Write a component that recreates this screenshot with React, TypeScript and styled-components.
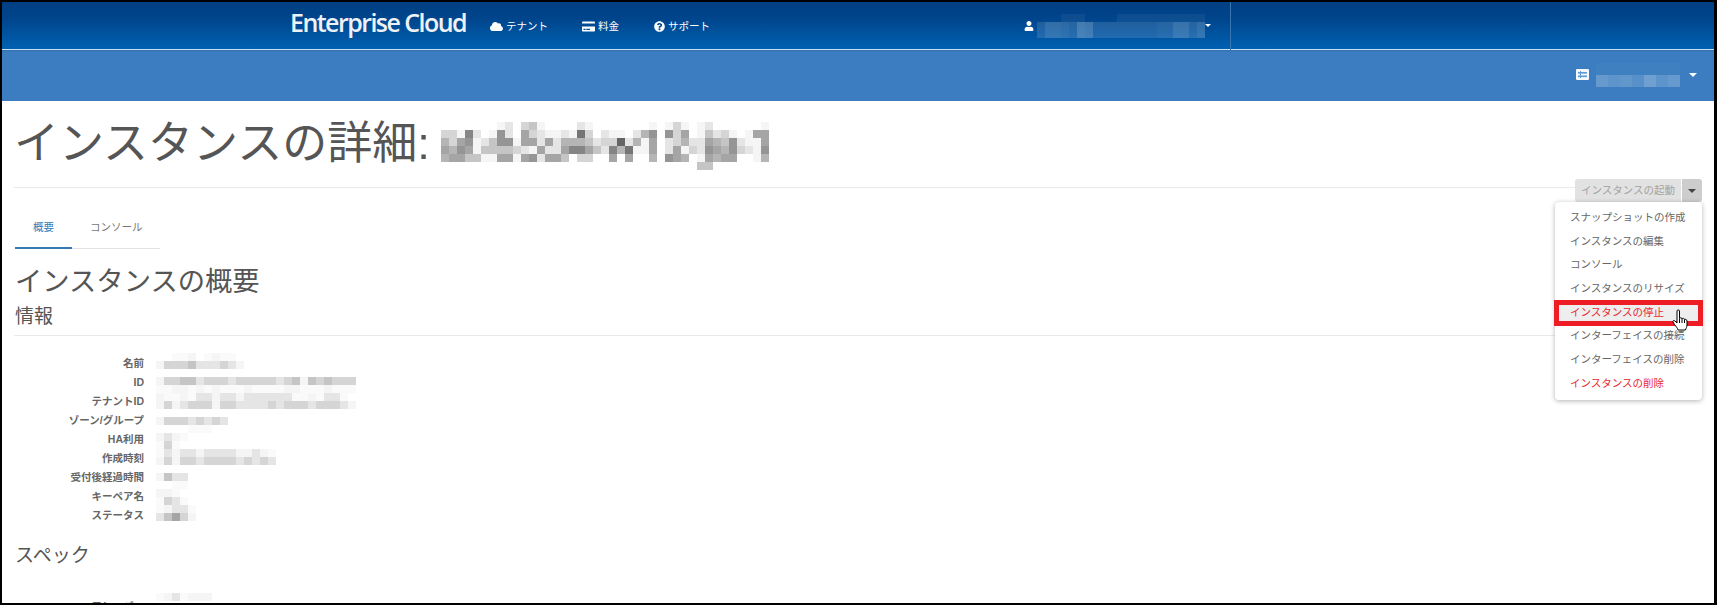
import styled, { createGlobalStyle } from 'styled-components';
import { FaCloud, FaCreditCard, FaQuestionCircle, FaUser } from 'react-icons/fa';

const GlobalStyle = createGlobalStyle`
  html, body {
    margin: 0;
    padding: 0;
    background: #fff;
    font-family: "Liberation Sans", "Noto Sans CJK JP", sans-serif;
    color: #555;
  }
`;

const Frame = styled.div`
  box-sizing: border-box;
  width: 1717px;
  height: 605px;
  overflow: hidden;
  border-style: solid;
  border-color: #000;
  border-width: 2px 3px 2px 2px;
  background: #fff;
`;

const TopBar = styled.header`
  display: flex;
  height: 47px;
  border-bottom: 1px solid #c9e0f4;
  background: linear-gradient(to bottom, #003f83 0%, #00458c 35%, #0061b2 100%);
  color: #fff;
`;

const TopBarInner = styled.div`
  box-sizing: border-box;
  display: flex;
  align-items: center;
  justify-content: space-between;
  width: 1229px;
  height: 48px;
  padding: 0 19px 0 288px;
  border-right: 1px solid #3a75b0;
`;

const Brand = styled.div`
  display: flex;
  align-items: center;
`;

const Logo = styled.div`
  width: 176px;
  margin-top: -9px;
  font-family: "Open Sans", sans-serif;
  font-size: 25px;
  font-weight: 600;
  line-height: 30px;
  letter-spacing: -1.55px;
  color: #eef2f6;
  white-space: nowrap;
`;

const NavItem = styled.div<{ $left: number }>`
  display: flex;
  align-items: center;
  gap: 3px;
  margin-left: ${(p) => p.$left}px;
  font-size: 10.5px;
  line-height: 14px;
  color: #fff;
`;

const UserBox = styled.div`
  display: flex;
  align-items: center;
  margin-top: -1px;

  svg {
    margin-right: 3px;
  }
`;

const Caret = styled.span<{ $size: number; $color: string; $left?: number }>`
  display: inline-block;
  width: 0;
  height: 0;
  margin-left: ${(p) => p.$left ?? 0}px;
  border-left: ${(p) => p.$size}px solid transparent;
  border-right: ${(p) => p.$size}px solid transparent;
  border-top: ${(p) => p.$size}px solid ${(p) => p.$color};
`;

const SubBar = styled.div`
  box-sizing: border-box;
  display: flex;
  align-items: center;
  justify-content: flex-end;
  height: 51px;
  padding: 0 17px 2px 0;
  background: linear-gradient(to bottom, #336fa9 0, #3b7dc0 2px, #3b7dc0 100%);

  svg {
    margin-right: 7px;
  }
`;

const Content = styled.main`
  padding: 0 12px;
`;

const PageHeader = styled.div`
  display: flex;
  align-items: flex-start;
  height: 86px;
  border-bottom: 1px solid #eaeaea;
`;

const PageTitle = styled.h1`
  margin: 18px 0 0 0;
  font-size: 45px;
  line-height: 50px;
  font-weight: 400;
  color: #555;
  white-space: nowrap;
`;

const TitleBlur = styled.div`
  margin: 21px 0 0 11px;
`;

const Toolbar = styled.div`
  display: flex;
  justify-content: flex-end;
  margin-top: -9px;
`;

const ButtonGroup = styled.div`
  position: relative;
  display: flex;
  height: 23px;
`;

const ActionButton = styled.div`
  width: 106px;
  border-radius: 3px 0 0 3px;
  background: #e2e2e2;
  color: #a3a3a3;
  font-size: 10.5px;
  line-height: 23px;
  text-align: center;
`;

const CaretButton = styled.div`
  display: flex;
  align-items: center;
  justify-content: center;
  width: 20px;
  margin-left: 1px;
  border-radius: 0 3px 3px 0;
  background: #cdcdcd;
`;

const Menu = styled.ul`
  box-sizing: border-box;
  position: absolute;
  top: 23px;
  right: 0;
  z-index: 5;
  width: 147px;
  height: 198px;
  margin: 0;
  padding: 4px 0;
  list-style: none;
  background: #fff;
  border-radius: 4px;
  box-shadow: 0 1px 5px rgba(0, 0, 0, 0.3);
`;

const MenuItem = styled.li<{ $danger?: boolean; $active?: boolean }>`
  position: relative;
  height: 23.7px;
  padding-left: 15px;
  font-size: 10.5px;
  line-height: 23.7px;
  white-space: nowrap;
  color: ${(p) => (p.$danger ? '#e8292f' : '#666')};
  background: ${(p) => (p.$active ? '#eeeeee' : 'transparent')};
`;

const Callout = styled.span`
  box-sizing: border-box;
  position: absolute;
  top: -1px;
  left: -1px;
  width: 149px;
  height: 26px;
  border: 5px solid #ee1c25;
`;

const HandCursor = styled.svg`
  position: absolute;
  top: 8px;
  left: 117px;
`;

const Tabs = styled.div`
  display: flex;
  width: 145px;
  height: 41px;
  margin: 5px 0 0 1px;
  border-bottom: 1px solid #e2e2e2;
`;

const Tab = styled.div<{ $active?: boolean }>`
  box-sizing: border-box;
  flex: none;
  height: 42px;
  padding: 0 18px;
  font-size: 10.5px;
  line-height: 40px;
  white-space: nowrap;
  color: ${(p) => (p.$active ? '#337ab7' : '#777')};
  border-bottom: 2px solid ${(p) => (p.$active ? '#337ab7' : 'transparent')};
`;

const SectionTitle = styled.h2`
  margin: 15px 0 0 1px;
  font-size: 27.3px;
  line-height: 36px;
  font-weight: 400;
  color: #555;
`;

const SubTitle = styled.h3<{ $top: number }>`
  margin: ${(p) => p.$top}px 0 0 1px;
  font-size: 19px;
  line-height: 26px;
  font-weight: 400;
  color: #555;
`;

const Rule = styled.div`
  height: 1px;
  margin-top: 5px;
  background: #eaeaea;
`;

const InfoBody = styled.div<{ $top: number }>`
  display: flex;
  align-items: flex-start;
  margin-top: ${(p) => p.$top}px;
`;

const Labels = styled.dl<{ $pad: number }>`
  flex: none;
  width: 130px;
  margin: 0 12px 0 0;
  padding-top: ${(p) => p.$pad}px;
`;

const Label = styled.dt`
  height: 19px;
  font-size: 10.5px;
  line-height: 19px;
  font-weight: 700;
  text-align: right;
  color: #666;
  white-space: nowrap;
`;

const MosaicRow = styled.div<{ $cell: number }>`
  display: flex;
  height: ${(p) => p.$cell}px;
`;

const MosaicCell = styled.span<{ $cell: number }>`
  flex: none;
  width: ${(p) => p.$cell}px;
  height: 100%;
`;

type Tone = 'gray' | 'tint';

// Each character of a row is one cell of the pixelated redaction.
function cellColor(ch: string, tone: Tone) {
  if (ch === '.') return 'transparent';
  const d = parseInt(ch, 17);
  if (tone === 'tint') return `rgba(255,255,255,${(d * 0.025).toFixed(3)})`;
  const v = Math.min(250, d * 16 + 5);
  return `rgb(${v},${v},${v})`;
}

function Mosaic({ rows, cell = 8, tone = 'gray' }: { rows: string[]; cell?: number; tone?: Tone }) {
  return (
    <div>
      {rows.map((row, i) => (
        <MosaicRow key={i} $cell={cell}>
          {row.split('').map((ch, j) => (
            <MosaicCell key={j} $cell={cell} style={{ background: cellColor(ch, tone) }} />
          ))}
        </MosaicRow>
      ))}
    </div>
  );
}

const titleRows = [
  '.......fe.dcf....ef.......f.fdf.fe......f',
  'ddf8e.f9e.adeffef7d.eff.eb9.9da.fcedf.faa',
  'bda9fec99faaeaebbbcedd6ebfa.edbeeabc9effa',
  'ab9afccccdefaeea88ace8b7ffa.eafde9ab9def9',
  'baaccffaafa9eaac.dd..a.a..b.9ab.fabaa..fb',
  '................................cc.......',
];

const valueRows = [
  '..ggf.gfgg',
  'fdddceeedef',
  '',
  'fddccedddedddddedcfcdcddd',
  'ggffgfgfgggfggggffgggfggg',
  'fggfgeefeefeeeeeeggfgeeg',
  'fdfedddfddeeeededddedddef',
  '',
  'fdddedede',
  '....ggg',
  'fefg',
  'gdg',
  'gefeefeeeeffefg',
  'fdfddeddddedede',
  '',
  'fcee',
  '..gg',
  'ffg',
  'gdeg',
  'gfeeg',
  'ecadf',
];

const specRows = ['gfegfff'];

const userRows = ['...222....22222222222', '588 76ba555555556699684'.replace(' ', '').slice(0, 21), '58876ba55555555669968'];
const tenantRows = ['1111111', '9786b79'];

const infoLabels = ['名前', 'ID', 'テナントID', 'ゾーン/グループ', 'HA利用', '作成時刻', '受付後経過時間', 'キーペア名', 'ステータス'];

const menuItems = [
  { label: 'スナップショットの作成' },
  { label: 'インスタンスの編集' },
  { label: 'コンソール' },
  { label: 'インスタンスのリサイズ' },
  { label: 'インスタンスの停止', danger: true, active: true },
  { label: 'インターフェイスの接続' },
  { label: 'インターフェイスの削除' },
  { label: 'インスタンスの削除', danger: true },
];

function App() {
  return (
    <Frame>
      <GlobalStyle />
      <TopBar>
        <TopBarInner>
          <Brand>
            <Logo>Enterprise Cloud</Logo>
            <NavItem $left={24}>
              <FaCloud size={13} />
              テナント
            </NavItem>
            <NavItem $left={34}>
              <FaCreditCard size={13} />
              料金
            </NavItem>
            <NavItem $left={35}>
              <FaQuestionCircle size={11} />
              サポート
            </NavItem>
          </Brand>
          <UserBox>
            <FaUser size={10} />
            <Mosaic rows={userRows} tone="tint" />
            <Caret $size={3} $color="#fff" />
          </UserBox>
        </TopBarInner>
      </TopBar>
      <SubBar>
        <svg width="13" height="11" viewBox="0 0 13 11">
          <rect x="0" y="0" width="13" height="11" rx="1" fill="#f4f8fc" />
          <rect x="2" y="3" width="9" height="1.6" fill="#5a9ad6" />
          <rect x="2" y="6.5" width="9" height="1.6" fill="#5a9ad6" />
          <rect x="4" y="2" width="1" height="7" fill="#5a9ad6" />
        </svg>
        <Mosaic rows={tenantRows} cell={12} tone="tint" />
        <Caret $size={4} $color="#fff" $left={9} />
      </SubBar>
      <Content>
        <PageHeader>
          <PageTitle>インスタンスの詳細:</PageTitle>
          <TitleBlur>
            <Mosaic rows={titleRows} />
          </TitleBlur>
        </PageHeader>
        <Toolbar>
          <ButtonGroup>
            <ActionButton>インスタンスの起動</ActionButton>
            <CaretButton>
              <Caret $size={4} $color="#444" />
            </CaretButton>
            <Menu>
              {menuItems.map((item) => (
                <MenuItem key={item.label} $danger={item.danger} $active={item.active}>
                  {item.label}
                  {item.active && (
                    <>
                      <Callout />
                      <HandCursor width="17" height="23" viewBox="0 0 17 23">
                        <path
                          d="M5 2C5 .6 7.5 .6 7.5 2V9.5C8 8.5 10 8.5 10 10C10.5 9 12.5 9 12.5 10.8C13 10 15 10.2 15 12V16C15 18 14 19 13.5 21H6C5.5 19 4 17.5 2.5 15.5L1 13C.5 11.5 2 11 3 12L5 14Z"
                          fill="#fff"
                          stroke="#000"
                          strokeWidth="1"
                        />
                        <path d="M7.5 10V14M10 10V14M12.5 11V14" stroke="#000" strokeWidth="1" fill="none" />
                      </HandCursor>
                    </>
                  )}
                </MenuItem>
              ))}
            </Menu>
          </ButtonGroup>
        </Toolbar>
        <Tabs>
          <Tab $active>概要</Tab>
          <Tab>コンソール</Tab>
        </Tabs>
        <SectionTitle>インスタンスの概要</SectionTitle>
        <SubTitle $top={4}>情報</SubTitle>
        <Rule />
        <InfoBody $top={17}>
          <Labels $pad={1}>
            {infoLabels.map((label) => (
              <Label key={label}>{label}</Label>
            ))}
          </Labels>
          <Mosaic rows={valueRows} />
        </InfoBody>
        <SubTitle $top={18}>スペック</SubTitle>
        <InfoBody $top={24}>
          <Labels $pad={4}>
            <Label>フレーバー</Label>
          </Labels>
          <Mosaic rows={specRows} />
        </InfoBody>
      </Content>
    </Frame>
  );
}

export default App;
